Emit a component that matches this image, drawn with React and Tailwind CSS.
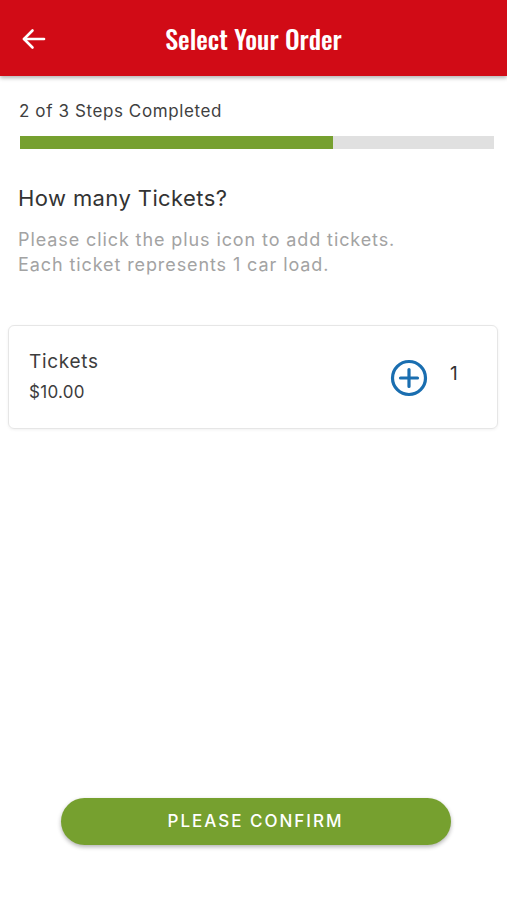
import React from "react";

export default function App() {
  return (
    <div className="w-[507px] h-[900px] bg-white flex flex-col relative" style={{ fontFamily: "Inter, 'Liberation Sans', sans-serif" }}>
      <div className="h-[76px] bg-[#d10b16] flex items-center relative shadow-[0_2px_4px_rgba(0,0,0,0.3)] z-10">
        <svg className="absolute left-[21px] top-[28px]" width="25" height="22" viewBox="0 0 25 22" fill="none" stroke="white" strokeWidth="2.6" strokeLinecap="round" strokeLinejoin="round">
          <path d="M23 11H3" />
          <path d="M11.5 2.5L3 11l8.5 8.5" />
        </svg>
        <div className="w-full text-center text-white text-[26px] font-medium" style={{ fontFamily: "Oswald, 'Liberation Sans Narrow', 'DejaVu Sans Condensed', sans-serif" }}>
          Select Your Order
        </div>
      </div>
      <div className="px-[19px] pt-[24px]">
        <div className="text-[17px] text-[#3f3f3f] leading-[22px] tracking-[0.6px]">2 of 3 Steps Completed</div>
        <div className="mt-[14px] ml-[1px] w-[474px] h-[13px] bg-[#e0e0e0] flex">
          <div className="w-[313px] h-full bg-[#76a02f]" />
        </div>
      </div>
      <div className="px-[18px] pt-[35px]">
        <div className="text-[22px] text-[#333] leading-[28px] tracking-[0.4px]">How many Tickets?</div>
        <div className="mt-[15px] text-[18px] text-[#a3a3a3] leading-[25px] tracking-[0.9px]">
          <div>Please click the plus icon to add tickets.</div>
          <div>Each ticket represents 1 car load.</div>
        </div>
      </div>
      <div className="mx-[8px] mt-[48px] w-[490px] h-[104px] border border-[#e6e6e6] rounded-[6px] shadow-[0_1px_3px_rgba(0,0,0,0.06)] flex items-center pl-[20px]">
        <div className="flex-1 -mt-[2px]">
          <div className="text-[19px] text-[#3d3d3d] leading-[24px] tracking-[0.7px]">Tickets</div>
          <div className="mt-[7px] text-[17px] text-[#3d3d3d] leading-[22px] tracking-[0.3px]">$10.00</div>
        </div>
        <svg className="mt-[2px]" width="38" height="38" viewBox="0 0 38 38" fill="none" stroke="#1a6eb0" strokeWidth="3.2" strokeLinecap="round">
          <circle cx="19" cy="19" r="16.5" />
          <path d="M19 10.5v17M10.5 19h17" />
        </svg>
        <div className="ml-[22px] w-[47px] text-[19px] text-[#333] -mt-[6px]">1</div>
      </div>
      <div className="flex-1" />
      <div className="flex justify-center pb-[55px]">
        <div className="ml-[4px] w-[390px] h-[47px] rounded-full bg-[#76a02f] shadow-[0_2px_4px_rgba(0,0,0,0.3)] flex items-center justify-center text-white text-[17px] font-medium tracking-[2px]">
          PLEASE CONFIRM
        </div>
      </div>
    </div>
  );
}
